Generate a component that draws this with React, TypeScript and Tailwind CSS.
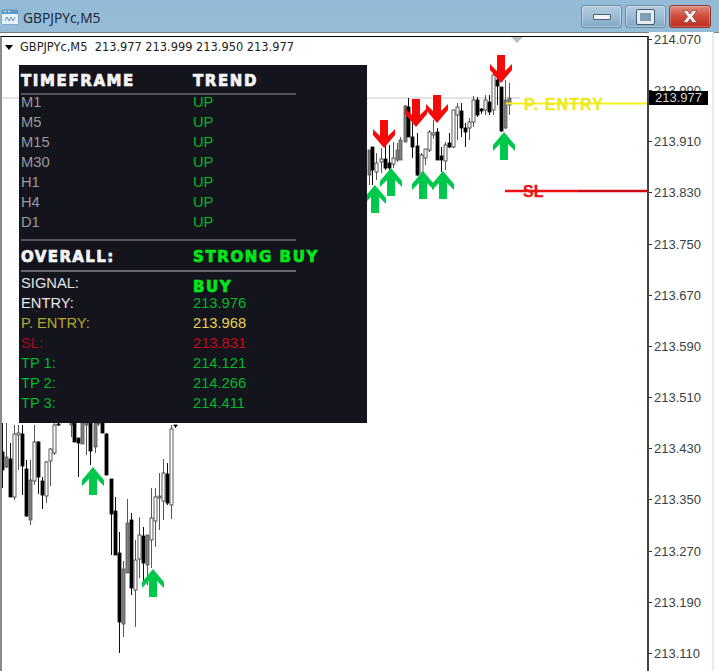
const AXIS_LABELS = ['214.070', '213.990', '213.910', '213.830', '213.750', '213.670', '213.590', '213.510', '213.430', '213.350', '213.270', '213.190', '213.110'];
const TREND_ROWS = ['M1', 'M5', 'M15', 'M30', 'H1', 'H4', 'D1'];

// x, wick top, wick bottom, body top, body bottom, kind (b = black, h = hollow, g = gray)
type Candle = [number, number, number, number, number, 'b' | 'h' | 'g'];

const CANDLES: Candle[] = [
  [2, 423, 488, 452, 470, 'b'], [6, 423, 468, 457, 467, 'g'], [10, 443, 497, 459, 497, 'b'],
  [14, 425, 500, 434, 497, 'h'], [18, 425, 470, 433, 435, 'h'], [22, 425, 495, 434, 466, 'b'],
  [26, 460, 517, 469, 516, 'b'], [30, 460, 525, 480, 520, 'g'], [34, 425, 485, 442, 481, 'h'],
  [38, 441, 494, 442, 477, 'b'], [42, 477, 509, 481, 495, 'b'], [46, 461, 503, 462, 496, 'h'],
  [50, 448, 486, 449, 461, 'h'], [54, 423, 455, 425, 453, 'h'], [58, 423, 426, 424, 425, 'b'],
  [71, 423, 437, 423, 425, 'g'], [74, 423, 442, 423, 442, 'b'], [78, 438, 477, 438, 443, 'b'],
  [82, 423, 444, 423, 444, 'g'], [86, 423, 455, 423, 425, 'g'], [90, 423, 465, 423, 451, 'b'],
  [95, 423, 453, 423, 447, 'g'], [98, 423, 426, 423, 424, 'g'], [102, 423, 433, 423, 433, 'b'],
  [106, 433, 475, 434, 475, 'b'], [111, 479, 555, 479, 514, 'b'], [115, 497, 555, 511, 555, 'b'],
  [119, 532, 653, 553, 622, 'b'], [123, 561, 637, 569, 624, 'g'], [127, 499, 573, 523, 573, 'g'],
  [131, 513, 595, 520, 588, 'b'], [135, 540, 627, 560, 590, 'h'], [139, 517, 578, 535, 559, 'h'],
  [143, 527, 585, 536, 563, 'b'], [147, 535, 585, 535, 565, 'g'], [151, 488, 568, 518, 540, 'h'],
  [155, 488, 547, 497, 521, 'h'], [159, 473, 530, 496, 498, 'g'], [163, 459, 520, 473, 501, 'h'],
  [167, 463, 505, 474, 503, 'b'], [171, 425, 519, 429, 505, 'h'], [175, 425, 428, 425, 426, 'b'],

  [369, 150, 185, 150, 175, 'g'], [372, 147, 185, 147, 170, 'b'], [376, 153, 180, 163, 172, 'h'],
  [381, 148, 173, 159, 162, 'h'], [385, 146, 170, 159, 168, 'b'], [389, 145, 170, 163, 168, 'b'],
  [393, 142, 168, 158, 164, 'h'], [397, 143, 162, 150, 160, 'g'], [400, 137, 160, 140, 160, 'g'],
  [405, 105, 142, 106, 142, 'g'], [408, 98, 137, 107, 137, 'b'], [412, 123, 158, 137, 147, 'b'],
  [417, 133, 176, 146, 175, 'b'], [421, 153, 175, 155, 173, 'h'], [425, 149, 165, 149, 158, 'h'],
  [429, 130, 152, 132, 150, 'h'], [433, 120, 139, 133, 135, 'h'], [437, 128, 160, 132, 160, 'b'],
  [441, 147, 172, 156, 160, 'b'], [445, 142, 170, 145, 161, 'h'], [449, 133, 148, 143, 147, 'b'],
  [453, 110, 148, 110, 147, 'h'], [457, 103, 140, 107, 115, 'h'], [461, 103, 137, 111, 128, 'b'],
  [465, 123, 147, 128, 132, 'b'], [469, 118, 140, 122, 128, 'h'], [473, 96, 127, 100, 122, 'h'],
  [477, 97, 117, 100, 115, 'b'], [481, 108, 114, 109, 111, 'b'], [485, 95, 115, 100, 110, 'h'],
  [489, 95, 115, 102, 112, 'b'], [493, 74, 115, 75, 110, 'h'], [497, 73, 105, 80, 86, 'b'],
  [501, 87, 132, 87, 131, 'b'], [505, 80, 129, 100, 128, 'g'], [509, 83, 115, 98, 105, 'g'],
];

const UP_ARROWS = [[93, 467], [153, 569], [375, 185], [391, 168], [423, 171], [443, 171], [504, 132]];
const DOWN_ARROWS = [[384, 148], [416, 127], [437, 123], [501, 83]];
const ARROW = 'M0 0L11 13V19L4 12V28H-4V12L-11 19V13Z';

function CandleMark({ candle }: { candle: Candle }) {
  const [x, top, bottom, bodyTop, bodyBottom, kind] = candle;
  const colors = { b: ['#000', '#000'], h: ['#fff', '#333'], g: ['#808080', '#555'] };
  return (
    <g>
      <line x1={x + 0.5} x2={x + 0.5} y1={top} y2={bottom} stroke={kind === 'b' ? '#111' : '#555'} strokeWidth={1} />
      <rect x={x - 1} y={bodyTop} width={3} height={bodyBottom - bodyTop} fill={colors[kind][0]} stroke={colors[kind][1]} strokeWidth={0.8} />
    </g>
  );
}

function ChartDrawing() {
  return (
    <svg className="absolute left-0 top-0 h-[634px] w-[645px]" viewBox="2 37 645 634">
      <line x1={2} x2={520} y1={98} y2={98} stroke="#d8d8d8" strokeWidth={1.5} />
      <path d="M511 37H523L517 43Z" fill="#bdbdbd" />
      {CANDLES.map((candle) => (
        <CandleMark key={candle[0]} candle={candle} />
      ))}
      <line x1={506} x2={647} y1={103.5} y2={103.5} stroke="#f5f01e" strokeWidth={2} />
      <line x1={505} x2={578} y1={191} y2={191} stroke="#ee1111" strokeWidth={2.5} />
      <line x1={578} x2={647} y1={191} y2={191} stroke="#cc0a14" strokeWidth={2.5} />
      {UP_ARROWS.map(([x, y]) => (
        <path key={x} d={ARROW} transform={`translate(${x} ${y})`} fill="#00c84a" />
      ))}
      {DOWN_ARROWS.map(([x, y]) => (
        <path key={x} d={ARROW} transform={`translate(${x} ${y}) scale(1 -1)`} fill="#f50a0a" />
      ))}
    </svg>
  );
}

function PanelHeading({ left, right, leftClass, rightClass }: { left: string; right: string; leftClass: string; rightClass: string }) {
  return (
    <div className="grid grid-cols-[172px_1fr] items-center font-['DejaVu_Sans',sans-serif] text-[15px] font-bold leading-none [-webkit-text-stroke:0.7px_currentColor]">
      <span className={leftClass}>{left}</span>
      <span className={rightClass}>{right}</span>
    </div>
  );
}

function Row({ label, value, labelClass, valueClass }: { label: string; value: string; labelClass: string; valueClass: string }) {
  return (
    <div className="grid h-5 grid-cols-[172px_1fr] items-center leading-none">
      <span className={labelClass}>{label}</span>
      <span className={valueClass}>{value}</span>
    </div>
  );
}

function SignalPanel() {
  return (
    <div className="absolute left-[17px] top-[28px] h-[358px] w-[348px] bg-[#14141d] pl-[2px] pt-[3px] font-['Liberation_Sans',Arial,sans-serif] text-[14.7px]">
      <div className="flex h-[26px] flex-col justify-center">
        <PanelHeading left="TIMEFRAME" right="TREND" leftClass="tracking-[1.6px] text-[#f4f4f4]" rightClass="tracking-[1.6px] text-[#f4f4f4]" />
      </div>
      <div className="-mt-px h-[2px] w-[275px] bg-[#55555e]" />
      <div className="-mt-[3px]">
        {TREND_ROWS.map((name) => (
          <Row key={name} label={name} value="UP" labelClass="text-[#9a9a9a]" valueClass="text-[#00b82a]" />
        ))}
      </div>
      <div className="mt-[7px] h-[2px] w-[275px] bg-[#55555e]" />
      <div className="mt-[3px] flex h-[26px] flex-col justify-center">
        <PanelHeading left="OVERALL:" right="STRONG BUY" leftClass="tracking-[1.4px] text-[#f4f4f4]" rightClass="tracking-[1.6px] text-[#00e81a]" />
      </div>
      <div className="mb-px h-[2px] w-[275px] bg-[#66666e]" />
      <div className="relative">
        <span className="absolute left-[172px] top-[7px] font-['DejaVu_Sans',sans-serif] text-[15px] font-bold leading-none tracking-[1.6px] text-[#00e81a] [-webkit-text-stroke:0.7px_currentColor]">BUY</span>
        <Row label="SIGNAL:" value="" labelClass="text-[#e4e4e4]" valueClass="" />
      </div>
      <Row label="ENTRY:" value="213.976" labelClass="text-[#e8e8e8]" valueClass="text-[#00b82a]" />
      <Row label="P. ENTRY:" value="213.968" labelClass="text-[#b3a82c]" valueClass="text-[#e6d452]" />
      <Row label="SL:" value="213.831" labelClass="text-[#a80420]" valueClass="text-[#c80420]" />
      <Row label="TP 1:" value="214.121" labelClass="text-[#00b82a]" valueClass="text-[#00b82a]" />
      <Row label="TP 2:" value="214.266" labelClass="text-[#00b82a]" valueClass="text-[#00b82a]" />
      <Row label="TP 3:" value="214.411" labelClass="text-[#00b82a]" valueClass="text-[#00b82a]" />
    </div>
  );
}

function WindowIcon() {
  return (
    <svg width="18" height="18" viewBox="0 0 18 18" className="mt-[1px] shrink-0">
      <rect x="0.5" y="1.5" width="17" height="15" rx="1" fill="#e8f2fa" stroke="#7ea8cc" />
      <rect x="1" y="2" width="16" height="4" fill="#5f97c9" />
      <path d="M3 3.5H5M7 3.5H9" stroke="#fff" />
      <path d="M4 13L6 9L8 13L10 9L12 13L14 9" fill="none" stroke="#6b8fa8" />
    </svg>
  );
}

function WindowButtons() {
  const blue = 'flex h-[23px] w-[41px] items-center justify-center rounded-[3px] border border-[#6d8ba3] bg-gradient-to-b from-[#b3cfe2] via-[#9dbdd5] to-[#80a8c6] shadow-[inset_0_0_0_1px_rgba(255,255,255,0.35)]';
  return (
    <div className="flex gap-[3px]">
      <div className={blue}>
        <div className="h-[6px] w-[18px] rounded-[1px] border border-[#4b6072] bg-[#f2f4f6]" />
      </div>
      <div className={blue}>
        <div className="h-[14px] w-[17px] rounded-[1px] border-[3px] border-[#e8ecef] bg-[#7f9db5] outline outline-1 outline-[#4b6072]" />
      </div>
      <div className="flex h-[23px] w-[42px] items-center justify-center rounded-[3px] border border-[#8a3a30] bg-gradient-to-b from-[#e08a7c] via-[#cf4a3a] to-[#c0281e] shadow-[inset_0_0_0_1px_rgba(255,255,255,0.25)]">
        <svg width="18" height="15" viewBox="0 0 18 15">
          <path d="M2 1.5H6.5L9 5L11.5 1.5H16L11.5 7.5L16 13.5H11.5L9 10L6.5 13.5H2L6.5 7.5Z" fill="#f3f3f3" stroke="#7b3a33" strokeWidth="0.7" />
        </svg>
      </div>
    </div>
  );
}

export default function App() {
  return (
    <div className="flex h-[671px] w-[719px] flex-col overflow-hidden bg-gradient-to-b from-[#93bad6] to-[#b8d5ec]">
      <div className="flex h-[32px] shrink-0 items-center pl-[1px] pr-[8px]">
        <WindowIcon />
        <span className="ml-1 mt-[3px] flex-1 font-['Open_Sans',sans-serif] text-[13.8px] leading-none text-[#14222e]">GBPJPYc,M5</span>
        <div className="mt-[1px]">
          <WindowButtons />
        </div>
      </div>
      <div className="flex min-h-0 flex-1 border-t border-[#6f7f8c] bg-white pr-[5px] pt-[3px]">
        <div className="relative h-[636px] w-[649px] shrink-0 border-l-2 border-r-2 border-t border-l-[#8a8a8a] border-r-[#444] border-t-black bg-white">
          <ChartDrawing />
          <div className="absolute left-[3px] top-[3px] flex items-center whitespace-pre font-['DejaVu_Sans',sans-serif] text-[11.4px] leading-[14px] text-[#222]">
            <span className="mr-[7px] h-0 w-0 border-x-[4.5px] border-t-[5px] border-x-transparent border-t-black" />
            GBPJPYc,M5  213.977 213.999 213.950 213.977
          </div>
          <SignalPanel />
          <span className="absolute left-[522px] top-[59px] font-['Liberation_Sans',Arial,sans-serif] text-[16px] font-bold leading-[18px] tracking-[1.1px] text-[#ecea22] [-webkit-text-stroke:0.3px_currentColor]">P. ENTRY</span>
          <span className="absolute left-[521px] top-[146px] font-['Liberation_Sans',Arial,sans-serif] text-[16px] font-bold leading-[18px] text-[#ee1111] [-webkit-text-stroke:0.3px_currentColor]">SL</span>
        </div>
        <div className="relative -mt-[4px] flex w-[65px] shrink-0 flex-col justify-between border-r-2 border-[#e3edf5] bg-white pb-[10px]">
          {AXIS_LABELS.map((label) => (
            <div key={label} className="flex h-[15px] items-center font-['Liberation_Sans',Arial,sans-serif] text-[13px] leading-none text-[#3a3f45]">
              <span className="mr-[2px] h-px w-[3px] bg-[#333]" />
              {label}
            </div>
          ))}
          <span className="absolute left-0 top-[59px] bg-black pl-[6px] pr-[6px] font-['Liberation_Sans',Arial,sans-serif] text-[13px] leading-[14px] text-[#d4d4d4]">213.977</span>
        </div>
      </div>
    </div>
  );
}
